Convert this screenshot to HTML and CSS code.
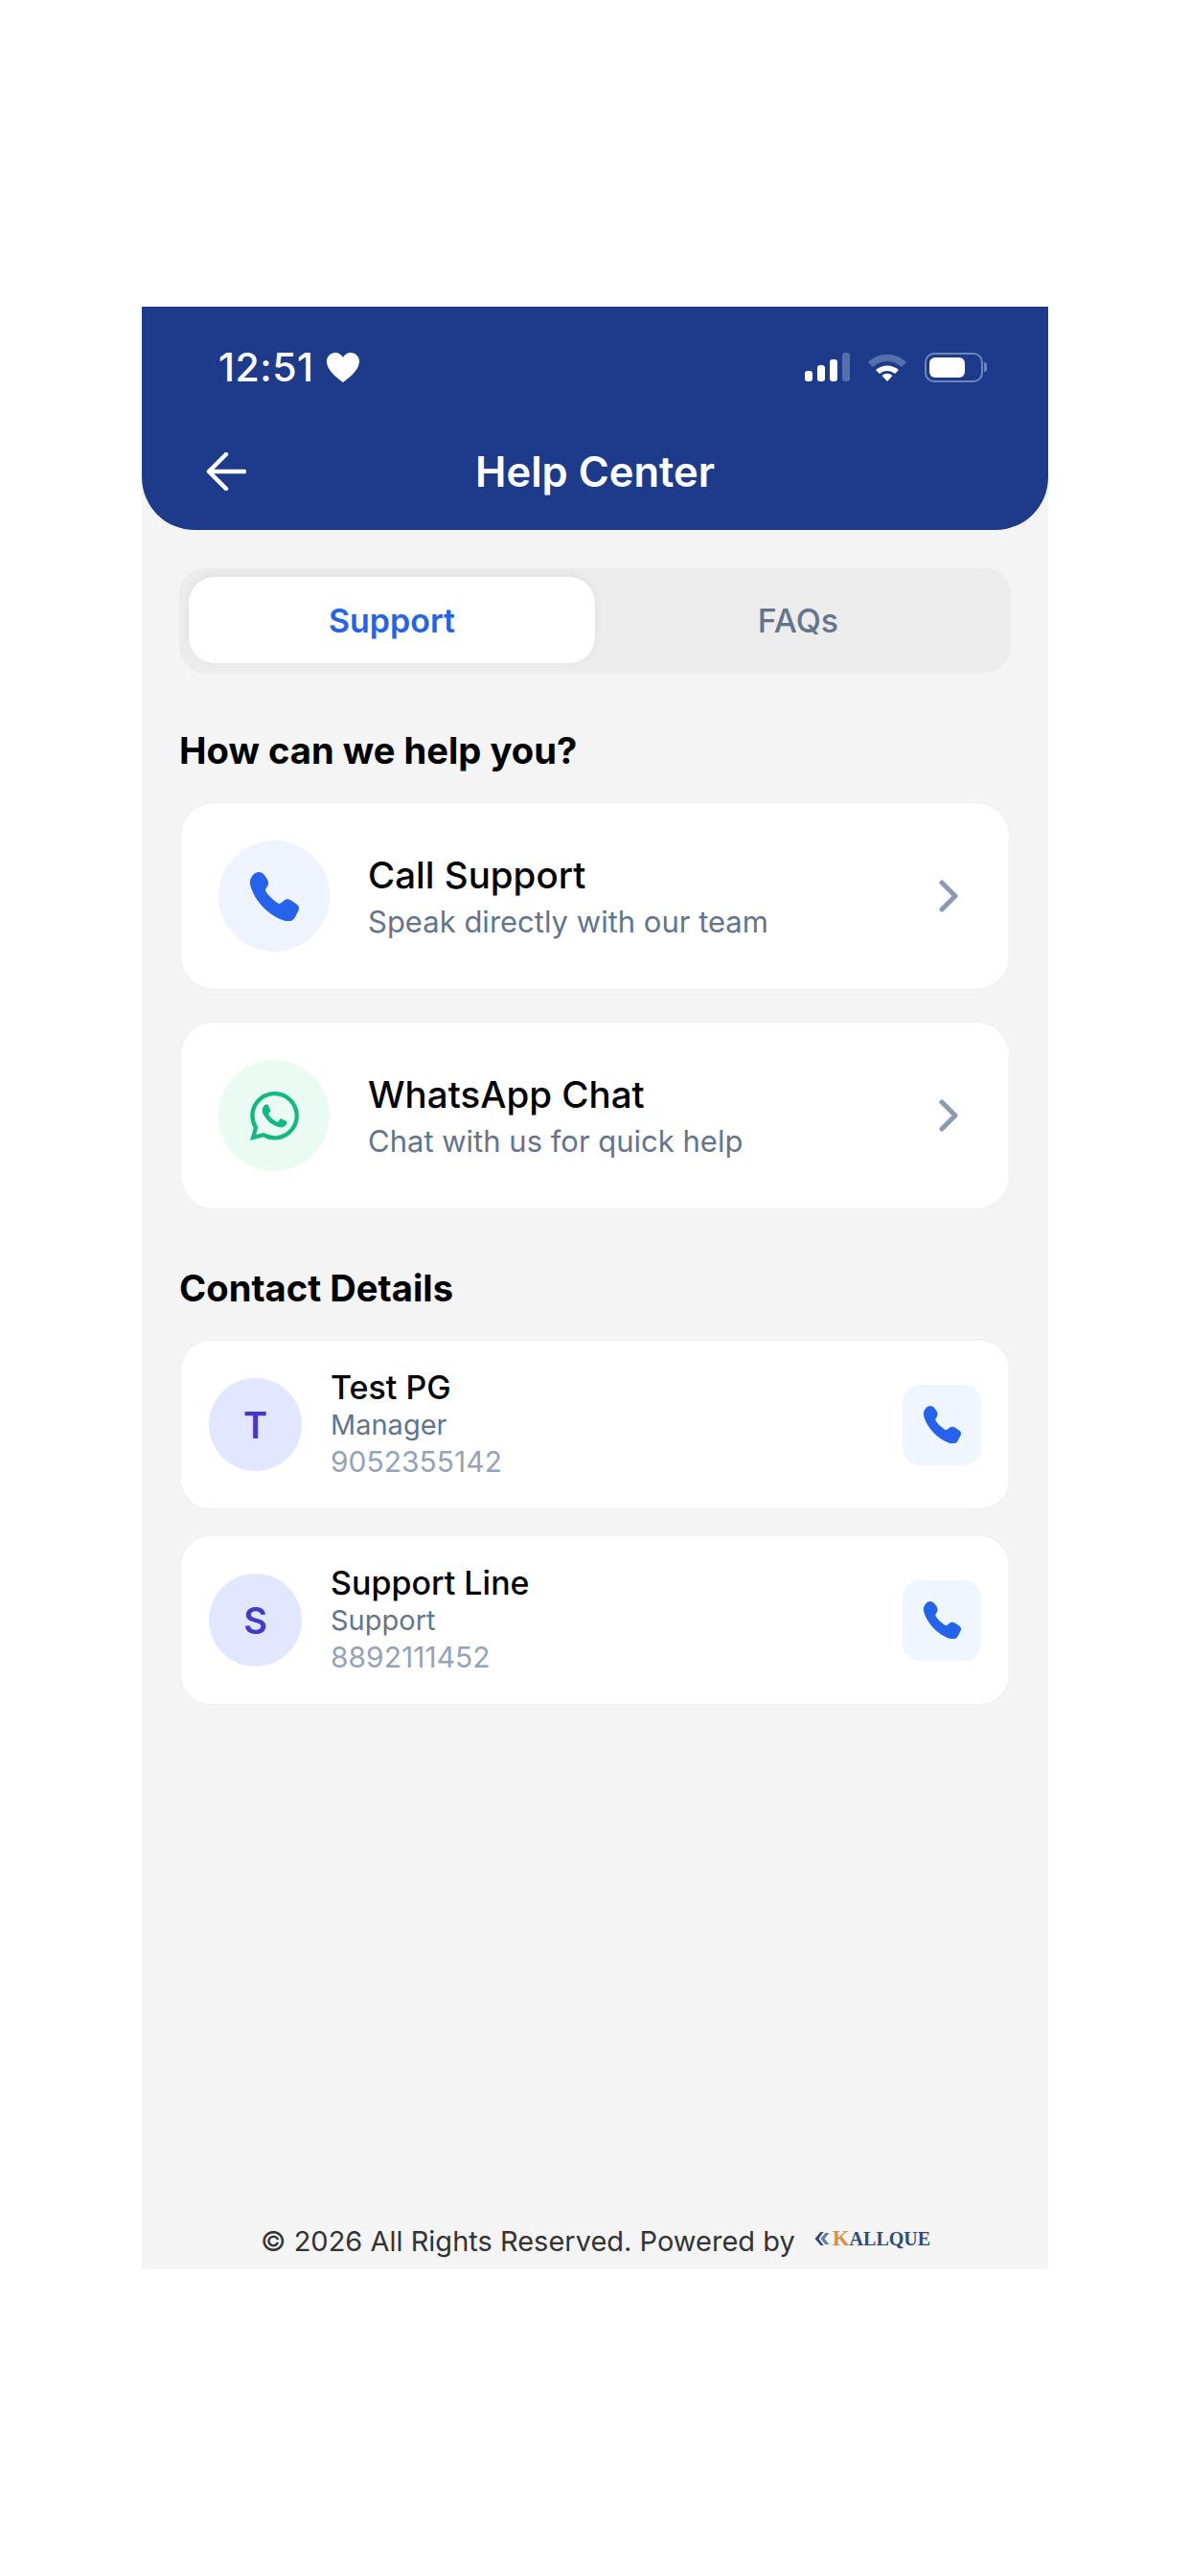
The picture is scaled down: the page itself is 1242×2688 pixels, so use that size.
FILE: index.html
```html
<!DOCTYPE html>
<html lang="en">
<head>
    <meta charset="UTF-8">
    <meta name="viewport" content="width=device-width, initial-scale=1.0">
    <title>Help Center</title>
    <link rel="stylesheet" href="styles.css">
</head>
<body>
    <svg class="sprites" width="0" height="0">
        <symbol id="phone" viewBox="0 0 51 51">
            <path d="M9 0C13 0 15 3 17 6C19 9 20 12 18 15C17 17 16 17 16 19C18 24 25 30 30 33C32 33 33 31 35 30C37 28 40 28 42 29L48 33C51 35 52 38 50 41L47 47C45 51 41 52 37 51C22 47 5 32 0 13C-1 9 1 5 4 2C5 1 7 0 9 0Z"/>
        </symbol>
    </svg>
    <div class="screen">
        <header class="header">
            <div class="status-bar">
                <div class="status-time">12:51
                    <svg class="heart" viewBox="0 0 34 31"><path d="M17 31C15 29 0 20 0 9C0 4 4 0 9 0C12.500 0 15.500 2 17 5C18.500 2 21.500 0 25 0C30 0 34 4 34 9C34 20 19 29 17 31Z"/></svg>
                </div>
                <div class="status-icons">
                    <div class="signal">
                        <span class="bar bar-1"></span>
                        <span class="bar bar-2"></span>
                        <span class="bar bar-3"></span>
                        <span class="bar bar-4"></span>
                    </div>
                    <svg class="wifi" viewBox="0 0 42 30">
                        <path class="wifi-dim" d="M1 10C12 -1 30 -1 41 10L36 15C27 7 15 7 6 15Z"/>
                        <path d="M9 18C16 12 26 12 33 18L29 22C24 18 18 18 13 22Z"/>
                        <path d="M15.500 24C19 21 23 21 26.500 24L21 30Z"/>
                    </svg>
                    <div class="battery">
                        <div class="battery-body"><span class="battery-fill"></span></div>
                        <span class="battery-nub"></span>
                    </div>
                </div>
            </div>
            <div class="nav-bar">
                <svg class="back" viewBox="0 0 42 40"><path d="M40 20H3M21 2L3 20L21 38"/></svg>
                <h1 class="nav-title">Help Center</h1>
            </div>
        </header>

        <main class="content">
            <div class="tabs">
                <div class="tab tab-active">Support</div>
                <div class="tab">FAQs</div>
            </div>

            <h2 class="section-title">How can we help you?</h2>
            <div class="action-card">
                <div class="action-icon action-icon-call">
                    <svg class="icon-call"><use href="#phone"/></svg>
                </div>
                <div class="action-text">
                    <div class="action-title">Call Support</div>
                    <div class="action-sub">Speak directly with our team</div>
                </div>
                <svg class="chevron" viewBox="0 0 20 34"><path d="M3 3L17 17L3 31"/></svg>
            </div>
            <div class="action-card">
                <div class="action-icon action-icon-chat">
                    <svg class="icon-chat" viewBox="0 0 24 24"><path d="M17.472 14.382c-.297-.149-1.758-.867-2.03-.967-.273-.099-.471-.148-.67.15-.197.297-.767.966-.94 1.164-.173.199-.347.223-.644.075-.297-.15-1.255-.463-2.39-1.475-.883-.788-1.48-1.761-1.653-2.059-.173-.297-.018-.458.13-.606.134-.133.298-.347.446-.52.149-.174.198-.298.298-.497.099-.198.05-.371-.025-.52-.075-.149-.669-1.612-.916-2.207-.242-.579-.487-.5-.669-.51-.173-.008-.371-.01-.57-.01-.198 0-.52.074-.792.372-.272.297-1.04 1.016-1.04 2.479 0 1.462 1.065 2.875 1.213 3.074.149.198 2.096 3.2 5.077 4.487.709.306 1.262.489 1.694.625.712.227 1.36.195 1.871.118.571-.085 1.758-.719 2.006-1.413.248-.694.248-1.289.173-1.413-.074-.124-.272-.198-.57-.347m-5.421 7.403h-.004a9.87 9.87 0 01-5.031-1.378l-.361-.214-3.741.982.998-3.648-.235-.374a9.86 9.86 0 01-1.51-5.26c.001-5.45 4.436-9.884 9.888-9.884 2.64 0 5.122 1.03 6.988 2.898a9.825 9.825 0 012.893 6.994c-.003 5.45-4.437 9.884-9.885 9.884m8.413-18.297A11.815 11.815 0 0012.05 0C5.495 0 .16 5.335.157 11.892c0 2.096.547 4.142 1.588 5.945L.057 24l6.305-1.654a11.882 11.882 0 005.683 1.448h.005c6.554 0 11.89-5.335 11.893-11.893a11.821 11.821 0 00-3.48-8.413z"/></svg>
                </div>
                <div class="action-text">
                    <div class="action-title">WhatsApp Chat</div>
                    <div class="action-sub">Chat with us for quick help</div>
                </div>
                <svg class="chevron" viewBox="0 0 20 34"><path d="M3 3L17 17L3 31"/></svg>
            </div>

            <h2 class="section-title section-title-contact">Contact Details</h2>
            <div class="contact-card">
                <div class="avatar">T</div>
                <div class="contact-text">
                    <div class="contact-name">Test PG</div>
                    <div class="contact-role">Manager</div>
                    <div class="contact-phone">9052355142</div>
                </div>
                <div class="call-button"><svg class="icon-small"><use href="#phone"/></svg></div>
            </div>
            <div class="contact-card">
                <div class="avatar">S</div>
                <div class="contact-text">
                    <div class="contact-name">Support Line</div>
                    <div class="contact-role">Support</div>
                    <div class="contact-phone">8892111452</div>
                </div>
                <div class="call-button"><svg class="icon-small"><use href="#phone"/></svg></div>
            </div>
        </main>

        <footer class="footer">
            <span class="footer-text">© 2026 All Rights Reserved. Powered by</span>
            <div class="logo">
                <svg class="logo-mark" viewBox="0 0 16 14"><path d="M7 0L1 7L7 14H10L5 7L10 0Z"/><path class="logo-mark-light" d="M12 1L7 7L12 13H16L11 7L16 1Z"/></svg>
                <span class="logo-text"><span class="logo-k">K</span>ALLQUE</span>
            </div>
        </footer>
    </div>
</body>
</html>
```

FILE: styles.css
```css
* {
    box-sizing: border-box;
}
body {
    margin: 0;
    padding: 320px 148px;
    background-color: #ffffff;
    font-family: Inter, "Liberation Sans", sans-serif;
}
.sprites {
    display: block;
}
.screen {
    height: 2048px;
    display: flex;
    flex-direction: column;
    background-color: #f4f4f4;
}

/* header */
.header {
    height: 233px;
    background-color: #1e3a8a;
    border-radius: 0 0 55px 55px;
    color: #ffffff;
    padding: 0 67px;
}
.status-bar {
    height: 123px;
    margin-right: -3px;
    padding: 3px 0 0 13px;
    display: flex;
    align-items: center;
    justify-content: space-between;
}
.status-time {
    display: flex;
    align-items: center;
    gap: 13px;
    font-size: 41px;
    font-weight: 500;
    letter-spacing: 0.5px;
}
.heart {
    width: 34px;
    height: 31px;
    fill: #ffffff;
}
.status-icons {
    display: flex;
    align-items: center;
    gap: 18px;
}
.signal {
    display: flex;
    align-items: flex-end;
    gap: 5px;
    height: 30px;
}
.bar {
    width: 8px;
    background-color: #ffffff;
    border-radius: 3px;
}
.bar-1 { height: 11px; }
.bar-2 { height: 17px; }
.bar-3 { height: 23px; }
.bar-4 {
    height: 30px;
    background-color: #5570ad;
}
.wifi {
    width: 42px;
    height: 30px;
    fill: #ffffff;
}
.wifi-dim {
    fill: #5570ad;
}
.battery {
    display: flex;
    align-items: center;
    gap: 1px;
}
.battery-body {
    width: 61px;
    height: 31px;
    border: 2px solid #6f86bb;
    border-radius: 10px;
    padding: 3px;
}
.battery-fill {
    display: block;
    width: 37px;
    height: 100%;
    background-color: #ffffff;
    border-radius: 6px;
}
.battery-nub {
    width: 3px;
    height: 10px;
    background-color: #6f86bb;
    border-radius: 0 3px 3px 0;
}
.nav-bar {
    height: 98px;
    display: flex;
    align-items: center;
    position: relative;
}
.back {
    position: absolute;
    left: 0;
    width: 42px;
    height: 40px;
    fill: none;
    stroke: #ffffff;
    stroke-width: 4.500;
    stroke-linecap: round;
    stroke-linejoin: round;
}
.nav-title {
    flex: 1;
    margin: 0;
    text-align: center;
    font-size: 43.500px;
    font-weight: 600;
}

/* main */
.content {
    flex: 1;
    padding: 40px 39px 0;
}
.tabs {
    height: 109px;
    display: flex;
    padding: 9px 10px 10px;
    background-color: #ececec;
    border-radius: 27px;
}
.tab {
    flex: 1;
    display: flex;
    align-items: center;
    justify-content: center;
    font-size: 34px;
    font-weight: 500;
    color: #64748b;
}
.tab-active {
    background-color: #ffffff;
    border-radius: 27px;
    box-shadow: 0 -2px 8px rgba(0, 0, 0, 0.05);
    color: #2563eb;
    font-weight: 600;
}
.section-title {
    margin: 58px 0 32px;
    font-size: 38.200px;
    line-height: 46px;
    font-weight: 650;
    color: #000000;
}
.section-title-contact {
    margin-top: 60px;
}
.action-card {
    height: 194px;
    margin: 0 2px 35px;
    padding: 0 39px;
    display: flex;
    align-items: center;
    background-color: #ffffff;
    border-radius: 34px;
    box-shadow: 0 0 2px rgba(0, 0, 0, 0.08);
}
.action-icon {
    width: 116px;
    height: 116px;
    flex-shrink: 0;
    display: flex;
    align-items: center;
    justify-content: center;
    border-radius: 50%;
}
.action-icon-call {
    background-color: #eff3fe;
}
.action-icon-chat {
    background-color: #eafbf3;
}
.icon-call {
    width: 51px;
    height: 51px;
    fill: #2563eb;
}
.icon-chat {
    width: 51px;
    height: 51px;
    fill: #10b981;
}
.action-text {
    flex: 1;
    margin-left: 40px;
    padding-top: 3px;
}
.action-title {
    font-size: 38.500px;
    line-height: 48px;
    font-weight: 550;
    color: #000000;
}
.action-sub {
    margin-top: 3px;
    font-size: 31px;
    line-height: 44px;
    color: #64748b;
}
.chevron {
    width: 20px;
    height: 34px;
    margin-right: 14px;
    fill: none;
    stroke: #8c9bb3;
    stroke-width: 5;
    stroke-linecap: round;
    stroke-linejoin: round;
}
.contact-card {
    height: 175px;
    margin: 0 2px 29px;
    padding: 0 29px;
    display: flex;
    align-items: center;
    background-color: #ffffff;
    border-radius: 30px;
    box-shadow: 0 0 2px rgba(0, 0, 0, 0.08);
}
.avatar {
    width: 97px;
    height: 97px;
    flex-shrink: 0;
    display: flex;
    align-items: center;
    justify-content: center;
    border-radius: 50%;
    background-color: #e0e7ff;
    color: #4338ca;
    font-size: 38px;
    font-weight: 600;
}
.contact-text {
    flex: 1;
    margin-left: 30px;
}
.contact-name {
    font-size: 34px;
    line-height: 41px;
    font-weight: 550;
    color: #000000;
}
.contact-role {
    font-size: 29px;
    line-height: 37px;
    color: #64748b;
}
.contact-phone {
    font-size: 30px;
    line-height: 41px;
    color: #94a3b8;
}
.call-button {
    width: 82px;
    height: 84px;
    display: flex;
    align-items: center;
    justify-content: center;
    background-color: #eff6ff;
    border-radius: 18px;
}
.icon-small {
    width: 39px;
    height: 39px;
    fill: #2563eb;
}

/* footer */
.footer {
    height: 64px;
    padding-left: 124px;
    display: flex;
    align-items: center;
    gap: 19px;
    font-size: 29px;
    color: #333333;
}
.footer-text {
    white-space: nowrap;
    padding-top: 5px;
}
.logo {
    display: flex;
    align-items: center;
    gap: 3px;
}
.logo-mark {
    width: 17px;
    height: 14px;
    fill: #2f4a7c;
}
.logo-mark-light {
    fill: #5f7ba6;
}
.logo-text {
    font-family: "Liberation Serif", serif;
    font-size: 20px;
    font-weight: 700;
    color: #2f4a7c;
}
.logo-k {
    color: #e0913f;
    font-size: 23px;
}
```
